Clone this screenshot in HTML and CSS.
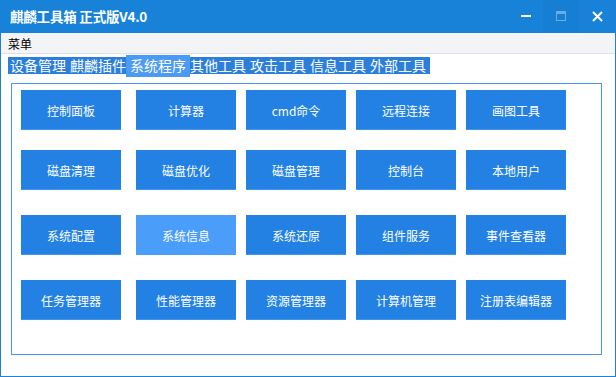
FILE: index.html
```html
<!DOCTYPE html>
<html lang="zh-CN">
<head>
<meta charset="utf-8">
<title>麒麟工具箱 正式版V4.0</title>
<link rel="stylesheet" href="styles.css">
</head>
<body>
<div class="window">
  <div class="titlebar">
    <span class="title">麒麟工具箱 正式版V4.0</span>
    <div class="controls">
      <span class="ctl ctl-min"><svg width="10" height="10" viewBox="0 0 10 10"><rect x="0" y="4" width="10" height="2" fill="#fff"/></svg></span>
      <span class="ctl ctl-max"><svg width="10" height="10" viewBox="0 0 10 10"><rect x="0.5" y="0.5" width="9" height="9" fill="none" stroke="#fff" stroke-width="1"/><rect x="0" y="0" width="10" height="3" fill="#fff"/></svg></span>
      <span class="ctl ctl-close"><svg width="11" height="11" viewBox="0 0 11 11"><path d="M1 1 L10 10 M10 1 L1 10" stroke="#fff" stroke-width="2" fill="none"/></svg></span>
    </div>
  </div>
  <div class="menubar"><span class="menu-item">菜单</span></div>
  <div class="tabs">
    <span class="tab">设备管理</span>
    <span class="tab">麒麟插件</span>
    <span class="tab tab-active">系统程序</span>
    <span class="tab">其他工具</span>
    <span class="tab">攻击工具</span>
    <span class="tab">信息工具</span>
    <span class="tab">外部工具</span>
  </div>
  <div class="group">
    <div class="grid">
      <span class="btn">控制面板</span>
      <span class="btn">计算器</span>
      <span class="btn">cmd命令</span>
      <span class="btn">远程连接</span>
      <span class="btn">画图工具</span>
      <span class="btn">磁盘清理</span>
      <span class="btn">磁盘优化</span>
      <span class="btn">磁盘管理</span>
      <span class="btn">控制台</span>
      <span class="btn">本地用户</span>
      <span class="btn">系统配置</span>
      <span class="btn btn-hover">系统信息</span>
      <span class="btn">系统还原</span>
      <span class="btn">组件服务</span>
      <span class="btn">事件查看器</span>
      <span class="btn">任务管理器</span>
      <span class="btn">性能管理器</span>
      <span class="btn">资源管理器</span>
      <span class="btn">计算机管理</span>
      <span class="btn">注册表编辑器</span>
    </div>
  </div>
</div>
</body>
</html>
```

FILE: styles.css
```css
html, body {
  margin: 0;
  padding: 0;
  background: #ffffff;
}
body {
  font-family: "Noto Sans CJK SC", "Noto Sans", sans-serif;
}
.window {
  box-sizing: border-box;
  width: 616px;
  height: 377px;
  border: 1px solid #1a82d9;
  border-top: 0;
  background: #ffffff;
  overflow: hidden;
}
.titlebar {
  height: 33px;
  margin: 0 -1px;
  background: #1782d8;
  display: flex;
  align-items: center;
  justify-content: space-between;
}
.title {
  color: #ffffff;
  font-weight: bold;
  font-size: 13.5px;
  padding-left: 10px;
  margin-top: -1px;
  letter-spacing: -0.2px;
}
.controls {
  display: flex;
  height: 100%;
  align-items: center;
}
.ctl {
  display: flex;
  align-items: center;
  justify-content: center;
  height: 100%;
}
.ctl svg { display: block; }
.ctl-min { width: 34px; }
.ctl-min svg { margin-top: -2px; }
.ctl-max {
  width: 36px;
  opacity: 0.35;
  background: rgba(0, 0, 0, 0.04);
}
.ctl-max svg { margin-top: -2px; }
.ctl-close { width: 37px; }
.ctl-close svg { margin-top: -1px; }
.menubar {
  height: 20px;
  background: #f3f4f6;
  border-bottom: 1px solid #dfe1e4;
  padding-left: 7px;
  display: flex;
  align-items: center;
}
.menu-item {
  font-size: 12px;
  color: #000000;
  line-height: 20px;
  margin-top: 2px;
}
.tabs {
  display: flex;
  width: max-content;
  margin: 3px 0 0 7px;
  height: 17px;
  padding-right: 2px;
  background: #2b7fdb;
}
.tab {
  font-size: 14px;
  line-height: 17px;
  color: #ffffff;
  padding: 0 2px;
  white-space: nowrap;
}
.tab-active {
  background: #4b9af3;
  margin: -2px -2px -3px;
  padding: 2px 4px 3px;
}
.group {
  box-sizing: border-box;
  width: 591px;
  height: 272px;
  margin: 9px 0 0 10px;
  border: 1px solid #4897f0;
  padding: 6px 0 0 9px;
}
.grid {
  display: grid;
  grid-template-columns: 115px 110px 110px 110px 100px;
  grid-template-rows: 60px 65px 65px 40px;
}
.btn {
  box-sizing: border-box;
  width: 100px;
  height: 40px;
  background: #2281e3;
  border-bottom: 1px solid #3f95ee;
  color: #ffffff;
  font-size: 12px;
  display: flex;
  align-items: center;
  justify-content: center;
  padding-top: 1px;
}
.btn-hover {
  background: #4a9df8;
  border-bottom-color: #4a9df8;
}
```
